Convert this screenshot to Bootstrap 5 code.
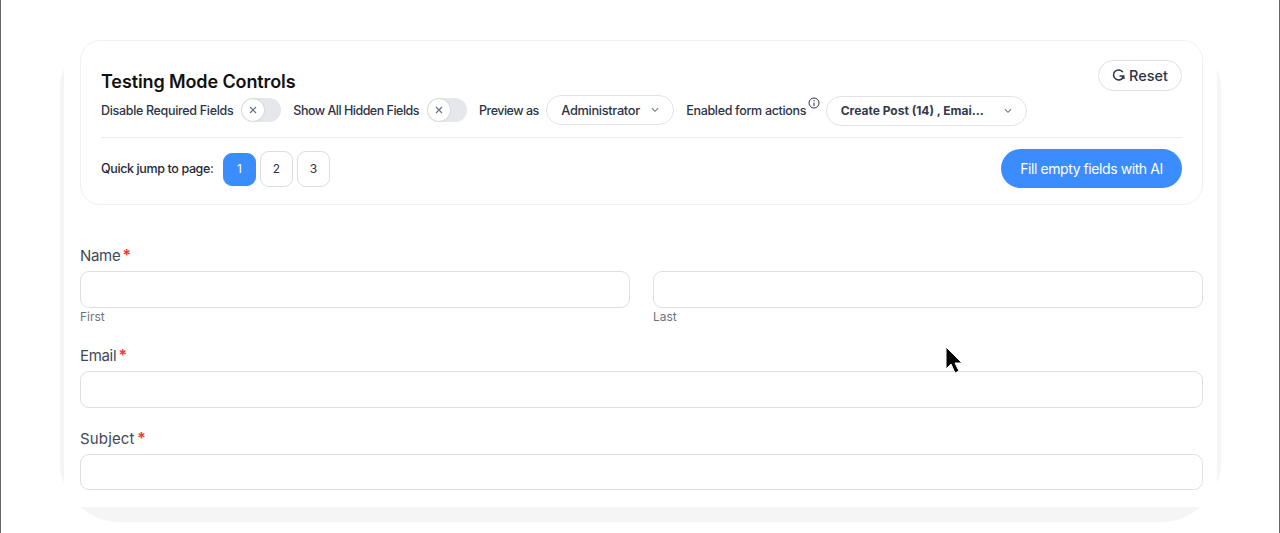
<!DOCTYPE html>
<html lang="en">
<head>
<meta charset="utf-8">
<title>Testing Mode Controls</title>
<link href="https://cdn.jsdelivr.net/npm/bootstrap@5.3.0/dist/css/bootstrap.min.css" rel="stylesheet">
<style>
html,body{height:533px;overflow:hidden}
body{font-family:Inter,"Noto Sans",sans-serif;background:#fff;color:#1f2937;border-left:1px solid #666;border-right:1px solid #666;position:relative;letter-spacing:-.02em}
.shell{margin:30px 58px 0 59px;height:492px;background:#f5f5f6;border-radius:60px;padding:0 4px 15px}
.inner-panel{height:100%;background:#fff;padding:10px 14px 0 16px}
.ctl-card{height:165px;border:1px solid #f1f1f3;border-radius:20px;padding:0 20px;margin-bottom:41px;position:relative}
.ctl-title{font-size:18px;font-weight:600;color:#111;line-height:22px;margin:0;padding-top:30px;letter-spacing:-.006em}
.ctl-row{height:36px;margin-top:-1px;font-size:12.5px;font-weight:500;color:#2d3445}
.row-txt{padding-top:2px}
.tight-txt{letter-spacing:-.04em}
.jump-txt{letter-spacing:-.03em}
.tog{width:40px;height:24px;background:#e5e7eb;border-radius:12px;padding:1px;margin:0 12px 0 8px;flex:none}
.tog-knob{width:22px;height:22px;border-radius:50%;background:#fff;box-shadow:0 0 2px rgba(0,0,0,.2)}
.pill-sel{height:30px;border:1px solid #e2e3e6;border-radius:15px;background:#fff;color:#2d3445;font-size:12.8px;font-weight:500;padding:0 14px}
.sel-a{width:128px;margin:0 12px 0 7.5px}
.sel-b{width:201px;margin:2px 0 0 5.5px;font-size:12px;font-weight:700;letter-spacing:0;color:#333a4a}
.info-ic{margin:-14px 0 0 2px}
.rst{position:absolute;top:19px;right:20px;width:84px;height:31px;border:1px solid #dfe0e3;border-radius:16px;background:#fff;color:#2d3445;font-size:14.5px;font-weight:500;padding:0;letter-spacing:0}
.ctl-rule{height:1px;background:#ececee;margin:9px 0 0}
.jump{height:62px;font-size:12.5px;font-weight:500;color:#1f2937}
.pg{width:33px;height:36px;border:1px solid #dcdde0;border-radius:9px;background:#fff;color:#2d3445;font-size:12px;padding:0;margin-left:4px}
.pg-on{height:33px;background:#3b8dff;border-color:#3b8dff;color:#fff;margin-left:9.5px}
.fill-ai{width:181px;height:39px;border-radius:20px;background:#3b8dff;border:0;color:#fff;font-size:14px;font-weight:400;padding:0;margin-top:-1px;letter-spacing:-.03em}
.fld-lbl{font-size:15px;line-height:20px;height:20px;color:#414858;margin:0 0 5px;display:block;font-weight:400}
.wide-lbl{letter-spacing:.01em}
.req{color:#ef3b3b;font-weight:700;font-size:16px;line-height:1;margin-left:-2px}
.fld-in{height:36.5px;min-height:0;border:1px solid #dedfe2;border-radius:9px;padding:0;box-shadow:none}
.fld-hint{font-size:12px;line-height:16px;color:#6b7280;margin-top:1px;letter-spacing:0}
.gut{--bs-gutter-x:23px;--bs-gutter-y:0}
.fld-a{margin-bottom:21.5px}
.fld-b{margin-bottom:21px}
.ptr{position:absolute;left:943px;top:346px}
</style>
</head>
<body>
<div class="shell"><div class="inner-panel">
  <div class="ctl-card">
    <h2 class="ctl-title">Testing Mode Controls</h2>
    <button type="button" class="btn rst d-flex align-items-center justify-content-center gap-1">
      <svg width="13" height="13" viewBox="0 0 13 13" fill="none" stroke="#2d3445" stroke-width="1.5"><path d="M10.8 3.2A5 5 0 1 0 11.5 7H7.5"/><path d="M11.5 7l.6 3" /></svg>Reset
    </button>
    <div class="ctl-row d-flex align-items-center">
      <span class="row-txt">Disable Required Fields</span>
      <span class="tog"><span class="tog-knob d-flex align-items-center justify-content-center"><svg width="8" height="8" viewBox="0 0 8 8" stroke="#6b7280" stroke-width="1.2"><path d="M1 1l6 6M7 1L1 7"/></svg></span></span>
      <span class="row-txt tight-txt">Show All Hidden Fields</span>
      <span class="tog"><span class="tog-knob d-flex align-items-center justify-content-center"><svg width="8" height="8" viewBox="0 0 8 8" stroke="#6b7280" stroke-width="1.2"><path d="M1 1l6 6M7 1L1 7"/></svg></span></span>
      <span class="row-txt tight-txt">Preview as</span>
      <span class="pill-sel sel-a d-flex align-items-center justify-content-between"><span class="row-txt">Administrator</span><svg width="8" height="6" viewBox="0 0 9 6" fill="none" stroke="#6b7280" stroke-width="1.2"><path d="M1 1l3.5 3.5L8 1"/></svg></span>
      <span class="row-txt">Enabled form actions</span>
      <svg class="info-ic" width="12" height="12" viewBox="0 0 12 12" fill="none" stroke="#2d3445"><circle cx="6" cy="6" r="5"/><path d="M6 5.5V9M6 3v1.2"/></svg>
      <span class="pill-sel sel-b d-flex align-items-center justify-content-between"><span>Create Post (14) , Emai...</span><svg width="8" height="6" viewBox="0 0 9 6" fill="none" stroke="#6b7280" stroke-width="1.2"><path d="M1 1l3.5 3.5L8 1"/></svg></span>
    </div>
    <div class="ctl-rule"></div>
    <div class="jump d-flex align-items-center justify-content-between">
      <div class="d-flex align-items-center">
        <span class="jump-txt">Quick jump to page:</span>
        <button type="button" class="btn pg pg-on">1</button>
        <button type="button" class="btn pg">2</button>
        <button type="button" class="btn pg">3</button>
      </div>
      <button type="button" class="btn fill-ai">Fill empty fields with AI</button>
    </div>
  </div>
  <div class="row gut fld-a">
    <div class="col-12"><label class="fld-lbl">Name <span class="req">*</span></label></div>
    <div class="col-6"><input class="form-control fld-in" type="text" aria-label="First"><div class="fld-hint">First</div></div>
    <div class="col-6"><input class="form-control fld-in" type="text" aria-label="Last"><div class="fld-hint">Last</div></div>
  </div>
  <div class="fld-b"><label class="fld-lbl">Email <span class="req">*</span></label><input class="form-control fld-in" type="text" aria-label="Email"></div>
  <div><label class="fld-lbl wide-lbl">Subject <span class="req">*</span></label><input class="form-control fld-in" type="text" aria-label="Subject"></div>
</div></div>
<svg class="ptr" width="20" height="30" viewBox="0 0 20 30"><path d="M2 1v22l5-5 4 9 4-2-4-8h7z" fill="#000" stroke="#fff" stroke-width="1"/></svg>
</body>
</html>
